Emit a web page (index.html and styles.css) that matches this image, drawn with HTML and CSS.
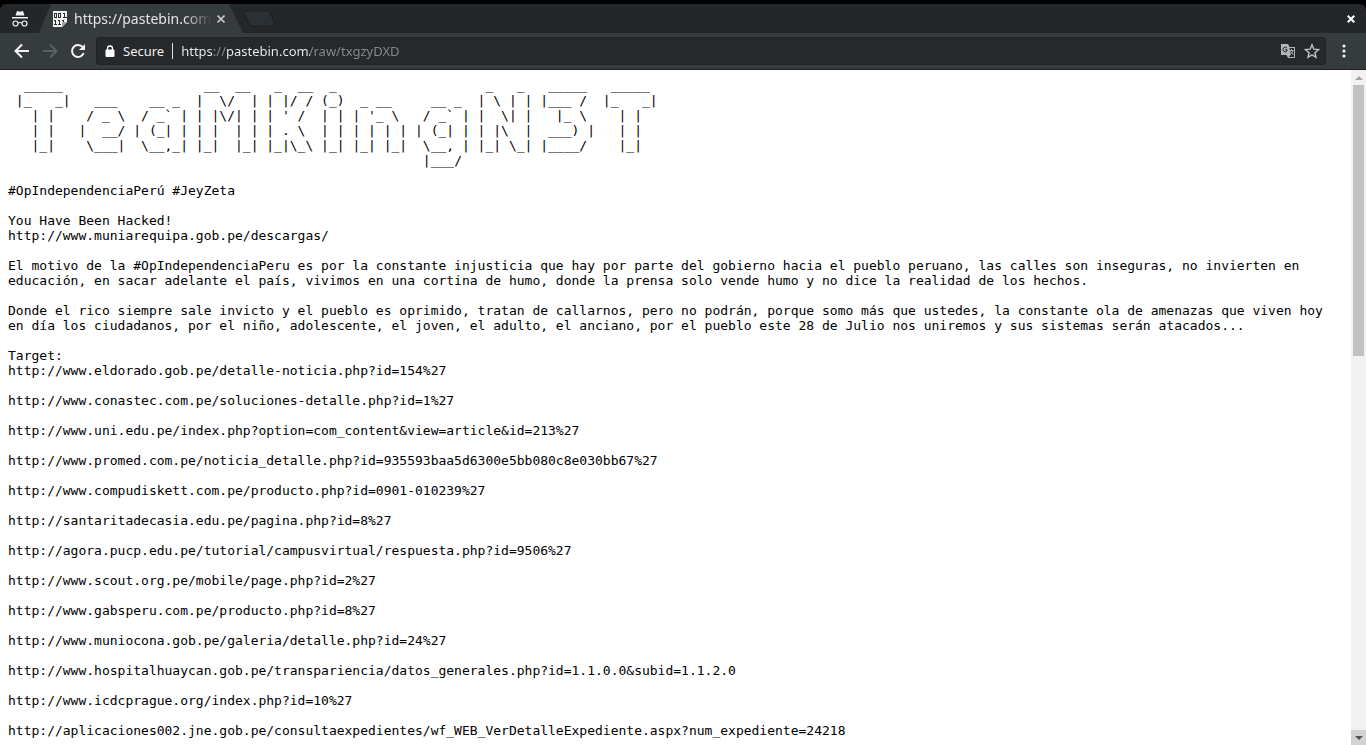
FILE: index.html
```
<!DOCTYPE html>
<html lang="es">
<head>
  <meta charset="UTF-8">
  <meta name="viewport" content="width=device-width, initial-scale=1.0">
  <title>https://pastebin.com/raw/txgzyDXD</title>
  <link rel="stylesheet" href="styles.css">
</head>
<body>
  <div class="browser">
    <!-- Tab strip -->
    <header class="tabstrip">
      <svg class="incognito" viewBox="0 0 18 18" width="18" height="18" aria-hidden="true">
        <path d="M6 1l3 .7L12 1l1.500 4.500h-9zM1 7h16v1.500H1z" fill="#f1f1f1"/>
        <circle cx="4.500" cy="13.500" r="2.500" fill="none" stroke="#f1f1f1" stroke-width="1.200"/>
        <circle cx="13.500" cy="13.500" r="2.500" fill="none" stroke="#f1f1f1" stroke-width="1.200"/>
        <path d="M7 13q2-1 4 0" fill="none" stroke="#f1f1f1" stroke-width="1.200"/>
      </svg>
      <div class="tab">
        <svg class="favicon" viewBox="0 0 16 16" width="16" height="16" aria-hidden="true">
          <path d="M1 0h14v11l-5 5H1z" fill="#f4f4f4"/>
          <path d="M2.500 2.500h2v4h-2zM6.500 2.500h2v4h-2zM11 2.500h1.500V7M10.500 6.500h4M2 9.500h1.500V14M2 13.500h3M6 9.500h1.500V14M6 13.500h3M10 9.500h1.500V11" fill="none" stroke="#2b2b2b" shape-rendering="crispEdges"/>
          <path d="M10 16v-5h5z" fill="#a3a7ab"/>
        </svg>
        <span class="tab-title">https://pastebin.com</span>
        <button class="tab-close" type="button" aria-label="Close tab">
          <svg viewBox="0 0 8 8" width="8" height="8"><path d="M.5.5l7 7M7.500.5l-7 7" stroke="#c3c5c6" stroke-width="1.600"/></svg>
        </button>
      </div>
      <button class="new-tab" type="button" aria-label="New tab">
        <svg viewBox="0 0 34 18" width="34" height="18"><path d="M2 1h22q2 0 3 2l5 11q1 2-1 2H9q-2 0-3-2L1 3q-1-2 1-2z" fill="#2a3033" stroke="#1b1e20"/></svg>
      </button>
      <button class="window-close" type="button" aria-label="Close window">
        <svg viewBox="0 0 8 8" width="8" height="8"><path d="M.7.7l6.600 6.600M7.300.7L.7 7.300" stroke="#fff" stroke-width="2"/></svg>
      </button>
    </header>

    <!-- Toolbar -->
    <nav class="toolbar">
      <div class="nav-buttons">
        <button type="button" aria-label="Back">
          <svg viewBox="0 0 16 16" width="16" height="16"><path d="M15 8H2M8 1.500L1.500 8 8 14.500" fill="none" stroke="#f3f3f3" stroke-width="2"/></svg>
        </button>
        <button type="button" aria-label="Forward" disabled>
          <svg viewBox="0 0 16 16" width="16" height="16"><path d="M1 8h13M8 1.500L14.500 8 8 14.500" fill="none" stroke="#5c6264" stroke-width="2"/></svg>
        </button>
        <button type="button" aria-label="Reload">
          <svg viewBox="0 0 16 16" width="16" height="16"><path d="M12.700 4.200A6 6 0 1 0 13.700 10" fill="none" stroke="#f3f3f3" stroke-width="2"/><path d="M15 1v6H9z" fill="#f3f3f3"/></svg>
        </button>
      </div>
      <div class="omnibox">
        <svg viewBox="0 0 10 12" width="10" height="12" aria-hidden="true"><path d="M1 5h8v6.500H1z" fill="#fff" stroke="#fff" stroke-linejoin="round"/><path d="M2.500 5V3.500a2.500 2.500 0 0 1 5 0V5" fill="none" stroke="#fff" stroke-width="1.300"/></svg>
        <label class="secure" for="address">Secure</label>
        <input class="address" id="address" type="text" value="https://pastebin.com/raw/txgzyDXD" spellcheck="false">
        <button type="button" aria-label="Translate">
          <svg viewBox="0 0 16 16" width="16" height="16"><path d="M1 1h7l1.500 3H15v11H8l-1.500-3H1z" fill="#b1b3b4"/><path d="M9.500 5H14v9H9l1.500-2z" fill="#25292b"/><path d="M7 5A2.300 2.300 0 1 0 7 8V6.700H5" fill="none" stroke="#25292b"/><path d="M9.500 7.500h4M11.500 6v1.500M13 7.500q-1 3-3 4M10.500 8.500q1 2 3 3" fill="none" stroke="#b1b3b4"/></svg>
        </button>
        <button type="button" aria-label="Bookmark this page">
          <svg viewBox="0 0 16 16" width="16" height="16"><path d="M8 1.800l1.800 4.400 4.700.4-3.600 3.100 1.100 4.600L8 11.900l-4 2.400 1.100-4.600-3.600-3.100 4.700-.4z" fill="none" stroke="#c0c2c3" stroke-width="1.400"/></svg>
        </button>
      </div>
      <button type="button" aria-label="Menu">
        <svg viewBox="0 0 4 14" width="4" height="14" fill="#f3f3f3"><circle cx="2" cy="2" r="1.600"/><circle cx="2" cy="7" r="1.600"/><circle cx="2" cy="12" r="1.600"/></svg>
      </button>
    </nav>

    <!-- Page -->
    <div class="viewport">
      <main class="page">
<pre>
  _____                  __  __   _  __  _                   _   _   _____   _____
 |_   _|   ___    __ _  |  \/  | | |/ / (_)  _ __     __ _  | \ | | |___ /  |_   _|
   | |    / _ \  / _` | | |\/| | | ' /  | | | '_ \   / _` | |  \| |   |_ \    | |
   | |   |  __/ | (_| | | |  | | | . \  | | | | | | | (_| | | |\  |  ___) |   | |
   |_|    \___|  \__,_| |_|  |_| |_|\_\ |_| |_| |_|  \__, | |_| \_| |____/    |_|
                                                     |___/

#OpIndependenciaPerú #JeyZeta

You Have Been Hacked!
http://www.muniarequipa.gob.pe/descargas/

El motivo de la #OpIndependenciaPeru es por la constante injusticia que hay por parte del gobierno hacia el pueblo peruano, las calles son inseguras, no invierten en educación, en sacar adelante el país, vivimos en una cortina de humo, donde la prensa solo vende humo y no dice la realidad de los hechos.

Donde el rico siempre sale invicto y el pueblo es oprimido, tratan de callarnos, pero no podrán, porque somo más que ustedes, la constante ola de amenazas que viven hoy en día los ciudadanos, por el niño, adolescente, el joven, el adulto, el anciano, por el pueblo este 28 de Julio nos uniremos y sus sistemas serán atacados...

Target:
http://www.eldorado.gob.pe/detalle-noticia.php?id=154%27

http://www.conastec.com.pe/soluciones-detalle.php?id=1%27

http://www.uni.edu.pe/index.php?option=com_content&amp;view=article&amp;id=213%27

http://www.promed.com.pe/noticia_detalle.php?id=935593baa5d6300e5bb080c8e030bb67%27

http://www.compudiskett.com.pe/producto.php?id=0901-010239%27

http://santaritadecasia.edu.pe/pagina.php?id=8%27

http://agora.pucp.edu.pe/tutorial/campusvirtual/respuesta.php?id=9506%27

http://www.scout.org.pe/mobile/page.php?id=2%27

http://www.gabsperu.com.pe/producto.php?id=8%27

http://www.muniocona.gob.pe/galeria/detalle.php?id=24%27

http://www.hospitalhuaycan.gob.pe/transpariencia/datos_generales.php?id=1.1.0.0&amp;subid=1.1.2.0

http://www.icdcprague.org/index.php?id=10%27

http://aplicaciones002.jne.gob.pe/consultaexpedientes/wf_WEB_VerDetalleExpediente.aspx?num_expediente=24218
</pre>
      </main>
      <div class="scrollbar" aria-hidden="true">
        <div class="scroll-arrow"><svg viewBox="0 0 8 4" width="8" height="4"><path d="M0 4l4-4 4 4z" fill="#a3a3a3"/></svg></div>
        <div class="scroll-track"><div class="scroll-thumb"></div></div>
        <div class="scroll-arrow scroll-down"><svg viewBox="0 0 8 4" width="8" height="4"><path d="M0 0h8L4 4z" fill="#505050"/></svg></div>
      </div>
    </div>
  </div>
</body>
</html>
```
FILE: styles.css
```
*, *::before, *::after {
  box-sizing: border-box;
}
body {
  margin: 0;
  background: #000;
  font-family: "Noto Sans", sans-serif;
  font-size: 13px;
}
button {
  display: flex;
  align-items: center;
  justify-content: center;
  padding: 0;
  border: none;
  background: none;
}
svg {
  display: block;
  flex: none;
}
.browser {
  display: flex;
  flex-direction: column;
  height: 100vh;
  padding-top: 4px;
  overflow: hidden;
}

/* Tab strip */
.tabstrip {
  display: flex;
  align-items: center;
  height: 29px;
  flex: none;
  padding: 0 11px;
  background: #242729;
  border-radius: 6px 6px 0 0;
}
.incognito {
  margin-right: 10px;
}
.tab {
  display: flex;
  align-items: center;
  width: 204px;
  height: 100%;
  padding: 0 16px 0 13px;
  background: #363c3e;
  clip-path: polygon(0 100%, 12px 0, 190px 0, 100% 100%);
}
.favicon {
  margin-right: 6px;
}
.tab-title {
  flex: 1;
  white-space: nowrap;
  font-size: 14px;
  color: #e2e3e3;
  mask-image: linear-gradient(to right, #000 78%, transparent 98%);
}
.tab-close {
  width: 12px;
}
.window-close {
  width: 8px;
  margin-left: auto;
}

/* Toolbar */
.toolbar {
  display: flex;
  align-items: center;
  gap: 10px;
  height: 37px;
  flex: none;
  padding: 0 14px;
  background: #363c3e;
  border-bottom: 1px solid #1e2122;
}
.toolbar button {
  min-width: 16px;
}
.nav-buttons {
  display: flex;
  gap: 12px;
}
.omnibox {
  display: flex;
  align-items: center;
  flex: 1;
  gap: 8px;
  height: 28px;
  padding: 0 5px 0 8px;
  background: #25292b;
  border: 1px solid #1f2325;
  border-radius: 3px;
}
.secure {
  padding-right: 8px;
  border-right: 1px solid #e0e0e0;
  color: #f1f1f1;
  line-height: 16px;
}
/* Scheme and host are bright, separators and path are dimmed */
.address {
  flex: 1;
  min-width: 0;
  padding: 0;
  border: none;
  outline: none;
  font: inherit;
  color: transparent;
  background: linear-gradient(to right, #f1f1f1 32px, #898c8e 32px 45px, #f1f1f1 45px 129px, #898c8e 129px);
  background-clip: text;
}

/* Page */
.viewport {
  display: flex;
  flex: 1;
  min-height: 0;
  background: #fff;
}
.page {
  flex: 1;
  min-width: 0;
  padding: 8px;
  overflow: hidden;
}
.page pre {
  margin: 0;
  color: #000;
  font-family: "DejaVu Sans Mono", monospace;
  font-size: 13px;
  line-height: 15px;
  white-space: pre-wrap;
  overflow-wrap: break-word;
}

/* Scrollbar */
.scrollbar {
  display: flex;
  flex-direction: column;
  width: 15px;
  background: #f1f1f1;
}
.scroll-arrow {
  display: flex;
  align-items: center;
  justify-content: center;
  height: 15px;
}
.scroll-down {
  background: #d2d2d2;
}
.scroll-track {
  flex: 1;
  padding: 0 2px;
}
.scroll-thumb {
  height: 42%;
  background: #c1c1c1;
}
```
